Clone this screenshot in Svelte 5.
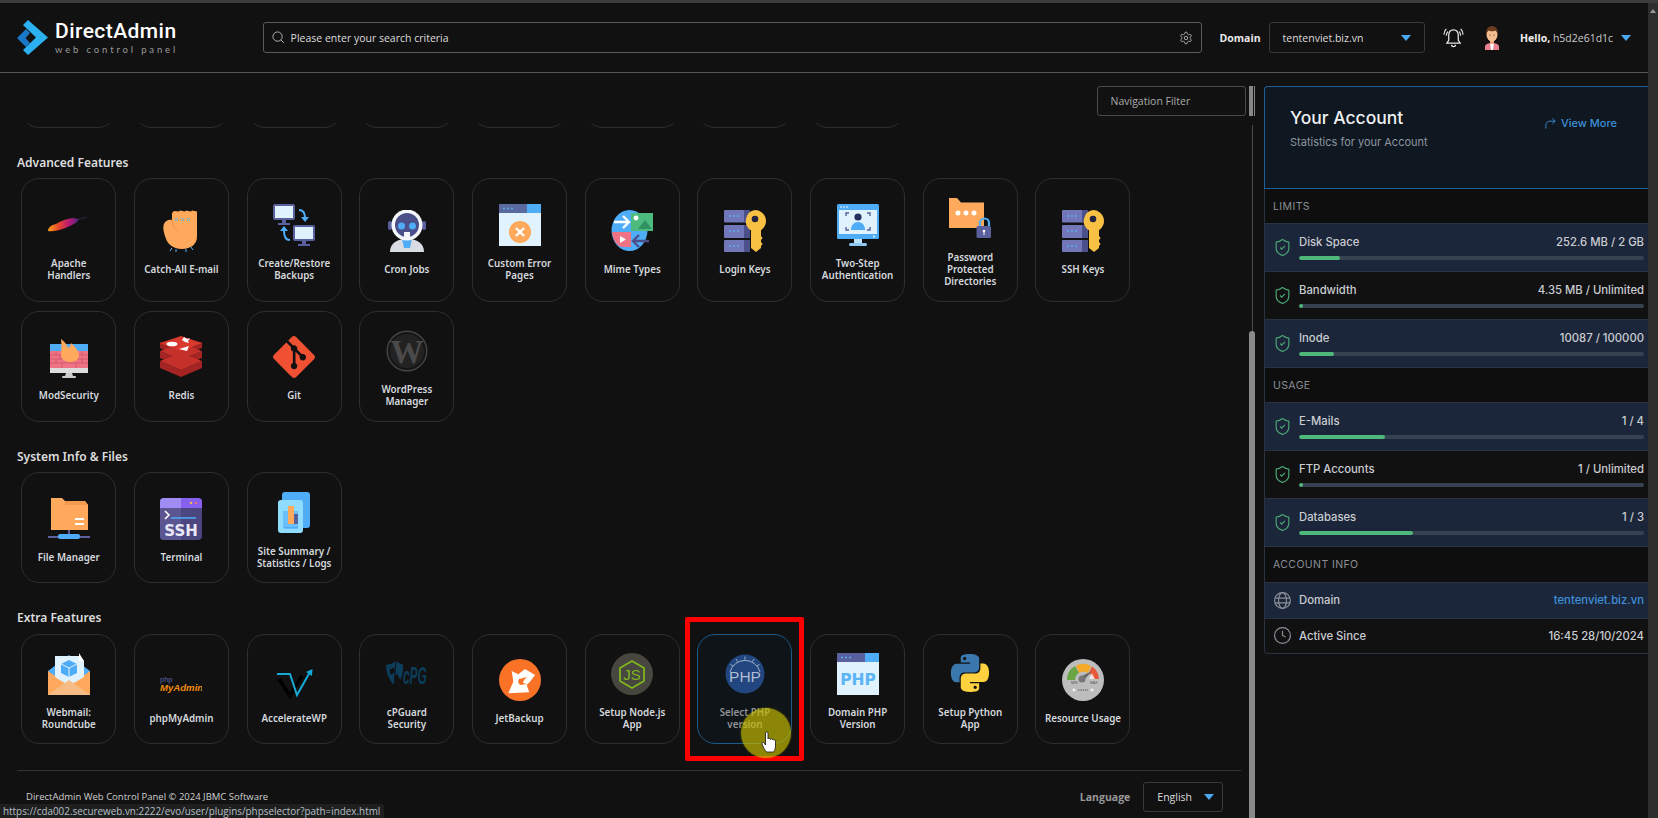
<script>
  const win = (bar, accent, inner) => `<rect x="0" y="0" width="42" height="42" fill="#e1f2ff"/><rect width="42" height="9" fill="${bar}"/><rect x="28" width="14" height="9" fill="${accent}"/><g fill="#5ab4f5"><circle cx="5" cy="4.5" r="1"/><circle cx="9" cy="4.5" r="1"/><circle cx="13" cy="4.5" r="1"/></g>${inner}`;
  const keys = `<g fill="#7177b8"><rect x="0" y="0" width="26" height="12.5" rx="1"/><rect x="0" y="15" width="26" height="13" rx="1"/><rect x="0" y="30" width="26" height="12" rx="1"/></g><g fill="#4b4f8a"><rect x="20" y="0" width="6" height="12.5"/><rect x="20" y="15" width="6" height="13"/><rect x="20" y="30" width="6" height="12"/></g><g fill="#5ab4f5"><circle cx="6" cy="6" r=".9"/><circle cx="10" cy="6" r=".9"/><circle cx="14" cy="6" r=".9"/><circle cx="6" cy="21" r=".9"/><circle cx="10" cy="21" r=".9"/><circle cx="14" cy="21" r=".9"/><circle cx="6" cy="36" r=".9"/><circle cx="10" cy="36" r=".9"/><circle cx="14" cy="36" r=".9"/></g><path fill="#f8c144" d="M31 0a11 11 0 0 1 6 20.2V26l1.6 2-1.6 2v2l1.6 2-1.6 2v2L32 42l-5-4V20.2A11 11 0 0 1 31 0z"/><circle cx="31" cy="9" r="3.3" fill="#23233f"/>`;

  const icons = {
    apache: `<defs><linearGradient id="ap" x1="0" x2="1"><stop offset="0" stop-color="#f8a01c"/><stop offset=".35" stop-color="#e8452c"/><stop offset=".7" stop-color="#b3187a"/><stop offset="1" stop-color="#4a2a78"/></linearGradient></defs><path fill="url(#ap)" d="M0 27c0-3 3-6 8-7 5-3 11-5.500 17-6l6 1c-1 3-5 5-9 7-7 3-14 6-22 5z"/><path stroke="#4a2a78" stroke-width=".6" d="M28 16l11-3"/>`,
    catchall: `<path fill="#ffa95c" d="M12 3l2-2 5 .5 1-1 5 1 1-1 5 1 1-1 5 1V27c0 7-6 12-15 12S7 34 5 26c-2-6-2-10-1-12 1-3 5-5 8-4z"/><path fill="none" stroke="#e8914a" stroke-width="1" d="M12 10c0 4 2 8 6 11"/><path stroke="#5ab4f5" stroke-width="1" d="M15 8l3 3m0-3l-3 3M21 8l3 3m0-3l-3 3M27 8l3 3m0-3l-3 3M12 38l-2 3M16 39l0 3M26 39l0 3M31 37l2 3"/>`,
    backup: `<g fill="#5a5f9e"><rect x="0" y="0" width="22" height="16" rx="2"/><rect x="9" y="16" width="4" height="3"/><rect x="5" y="19" width="12" height="2"/><rect x="20" y="21" width="22" height="16" rx="2"/><rect x="29" y="37" width="4" height="3"/><rect x="25" y="40" width="12" height="2"/></g><rect x="2" y="2" width="18" height="12" fill="#e1f2ff"/><rect x="22" y="23" width="18" height="12" fill="#e1f2ff"/><g fill="none" stroke="#4facf7" stroke-width="2"><path d="M26 6c4 0 6 3 6 8"/><path d="M16 36c-4 0-6-3-6-9" transform="translate(1 0)"/></g><path fill="#4facf7" d="M28 13h8l-4 5zM7 27h8l-4-5z"/>`,
    cron: `<path fill="#d9dde3" d="M4 42c0-9 7-13 17-13s17 4 17 13z"/><path fill="#4facf7" d="M16 29h10l-2 9h-6z"/><rect x="2" y="11" width="4" height="9" rx="2" fill="#5a5f9e"/><rect x="36" y="11" width="4" height="9" rx="2" fill="#5a5f9e"/><circle cx="21" cy="15" r="15.5" fill="#f4f6fa"/><circle cx="21" cy="15" r="12" fill="#4b4f8a"/><circle cx="15.5" cy="16" r="3.5" fill="#4facf7"/><circle cx="26.5" cy="16" r="3.5" fill="#4facf7"/><path fill="#f4f6fa" d="M18 22h6v5h-6z"/>`,
    error: win('#5a6a9e','#4facf7',`<circle cx="21" cy="28" r="11" fill="#ffa95c"/><path stroke="#fff" stroke-width="2.4" d="M17 24l8 8m0-8l-8 8"/>`),
    mime: `<ellipse cx="18.5" cy="20.5" rx="18" ry="20.5" fill="#4facf7"/><rect x="20" y="3" width="22" height="18" fill="#4dbb7e"/><circle cx="25" cy="8" r="2.4" fill="#fff"/><path fill="#2f9160" d="M27 19l7-9 7 9z"/><path fill="#ef7385" d="M1 22h19v15H12C6 37 2 30 1 22z"/><path fill="#fff" d="M9 26l6 3.5L9 33z"/><path stroke="#fff" stroke-width="2.4" fill="none" d="M3 12h14M12 6l6 6-6 6"/><path stroke="#4b4f8a" stroke-width="2.4" fill="none" d="M38 31H22M28 25l-6 6 6 6"/>`,
    keys,
    twostep: `<rect y="0" width="42" height="35" rx="1.5" fill="#4facf7"/><rect x="2" y="6" width="38" height="24" fill="#e1f2ff"/><g fill="#fff"><circle cx="4" cy="3" r=".8"/><circle cx="7" cy="3" r=".8"/><circle cx="10" cy="3" r=".8"/><circle cx="37" cy="32.5" r="1"/></g><circle cx="21" cy="13" r="3.6" fill="#23305f"/><path fill="#4facf7" d="M14 26c0-5 3-8 7-8s7 3 7 8z"/><path fill="none" stroke="#5a5f9e" stroke-width="1.4" d="M9 12V9h3M30 9h3v3M9 23v3h3M33 23v3h-3"/><rect x="17" y="35" width="8" height="4" fill="#bfe2fb"/><rect x="12" y="39" width="18" height="3" rx="1.5" fill="#8fc8f2"/>`,
    password: `<path fill="#ffa95c" d="M0 0h8l4 4.5h23V30H0z"/><g fill="#fff"><circle cx="9" cy="15" r="2.5"/><circle cx="17" cy="15" r="2.5"/><circle cx="25" cy="15" r="2.5"/></g><path fill="none" stroke="#4facf7" stroke-width="2.2" d="M31 29v-4a4.5 4.5 0 0 1 9 0v4"/><rect x="27.5" y="28" width="14.5" height="12" rx="1.5" fill="#5a5f9e"/><circle cx="35" cy="33" r="1.3" fill="#fff"/><rect x="34.5" y="33" width="1" height="4" fill="#fff"/>`,
    modsec: `<rect x="2" y="8" width="38" height="29" fill="#ddd"/><rect x="2" y="8" width="38" height="9" fill="#4facf7"/><rect x="2" y="15" width="38" height="17" fill="#ef7385"/><path stroke="#c94f63" stroke-width=".7" fill="none" d="M2 19h38M2 23h38M2 27h38M8 15v4M16 15v4M26 15v4M34 15v4M12 19v4M30 19v4M8 23v4M34 23v4M14 27v5M28 27v5"/><path fill="#ffa95c" d="M13 3c4 3 6 6 7 9 2-1 3-3 3-5 4 4 8 8 8 12 0 5-4 7-9 7s-9-3-9-7c0-4 1-10 0-16z"/><path fill="#ccc" d="M18 37h6l1 3h-8z"/><rect x="14" y="40" width="14" height="2" rx="1" fill="#ccc"/>`,
    redis: `<g fill="#a32422"><path d="M0 25l21 9 21-9v7l-21 9-21-9z"/><path d="M0 15l21 9 21-9v7l-21 9-21-9z"/><path d="M0 6l21 9 21-9v6l-21 9-21-9z"/></g><path fill="#c6302b" d="M0 25l21-8 21 8-21 9z"/><path fill="#c6302b" d="M0 15l21-8 21 8-21 9z"/><path fill="#d8392c" d="M0 7L21 0l21 7-21 8z"/><ellipse cx="12" cy="8" rx="5.5" ry="2.3" fill="#fff"/><path fill="#fff" d="M22 4l2-3 3 2 3-1-2 3 1 2-4-1zM19 13l10-3-2 5z"/>`,
    git: `<path transform="scale(1.75)" fill="#f05133" d="M23.546 10.93L13.067.452c-.604-.603-1.582-.603-2.188 0L8.708 2.627l2.76 2.76c.645-.215 1.379-.07 1.889.441.516.515.658 1.258.438 1.9l2.658 2.66c.645-.223 1.387-.078 1.9.435.721.72.721 1.884 0 2.604-.719.719-1.881.719-2.6 0-.539-.541-.674-1.337-.404-1.996L12.86 8.955v6.525c.176.086.342.203.488.348.713.721.713 1.883 0 2.6-.719.721-1.889.721-2.609 0-.719-.719-.719-1.879 0-2.598.182-.18.387-.316.605-.406V8.835c-.217-.091-.424-.222-.6-.401-.545-.545-.676-1.342-.396-2.009L7.636 3.7.45 10.881c-.6.605-.6 1.584 0 2.189l10.48 10.477c.604.604 1.582.604 2.186 0l10.43-10.43c.605-.603.605-1.582 0-2.187"/>`,
    wp: `<circle cx="21" cy="21" r="19.8" fill="#161616" stroke="#454545" stroke-width="1.4"/><circle cx="21" cy="21" r="17" fill="#222"/><text x="21" y="33" text-anchor="middle" font-family="Liberation Serif" font-weight="700" font-size="33" fill="#4a4a4a">W</text>`,
    files: `<path fill="#ffa95c" d="M3 0h11l3 3h20l3 4v25H3z"/><path fill="#f29a4d" d="M17 3h20l3 4H17z"/><rect x="27" y="20" width="9" height="2" fill="#fff"/><rect x="27" y="25" width="9" height="2" fill="#fff"/><rect x="20" y="32" width="2" height="6" fill="#5a5f9e"/><rect x="0" y="38" width="42" height="2" fill="#5a5f9e"/><rect x="10" y="36" width="22" height="5" rx="2" fill="#4facf7"/>`,
    term: `<rect width="42" height="42" rx="4" fill="#4b4580"/><path fill="#5b5592" d="M4 0h17v42H4a4 4 0 0 1-4-4V4a4 4 0 0 1 4-4z"/><path fill="#a08cf5" d="M4 0h17v10H0V4a4 4 0 0 1 4-4z"/><path fill="#8860f0" d="M21 0h17a4 4 0 0 1 4 4v6H21z"/><circle cx="31" cy="5" r="1.2" fill="#f8c144"/><circle cx="36" cy="5" r="1.2" fill="#ef7385"/><path fill="none" stroke="#fff" stroke-width="1.6" d="M5 13l4 4-4 4"/><rect x="11" y="19.2" width="25" height="1.5" fill="#4facf7"/><text x="21" y="38" text-anchor="middle" font-family="DejaVu Sans" font-weight="700" font-size="15" fill="#e8e8f5">SSH</text>`,
    summary: `<rect x="9" y="0" width="28" height="36" rx="3" fill="#4facf7"/><rect x="5" y="8" width="25" height="33" rx="3" fill="#8fdcff"/><rect x="10" y="19" width="15" height="17" fill="#4facf7" opacity=".6"/><rect x="15" y="14" width="6" height="18" fill="#ffa95c"/><rect x="21" y="22" width="4" height="10" fill="#5a5f9e"/><rect x="11" y="35" width="14" height="1.6" fill="#4facf7"/>`,
    webmail: `<path fill="#4facf7" d="M0 18L21 2l21 16v6H0z"/><path fill="#ffa95c" d="M0 18l21 15 21-15v24H0z"/><path fill="#e1f2ff" d="M7 3h24l5 5v16l-15 9L7 24z"/><path fill="#fff" d="M31 0l5 8h-5z"/><path fill="#4facf7" d="M21 7l8 4v9l-8 4-8-4v-9z"/><path fill="none" stroke="#e1f2ff" stroke-width="1" d="M13 11l8 4 8-4M21 15v9"/><path fill="#f7bb85" d="M0 42l21-15 21 15z"/>`,
    pma: `<text x="0" y="23" font-family="Liberation Sans" font-size="7.5" fill="#5a67a8">php</text><text x="0" y="32" font-family="Liberation Sans" font-style="italic" font-weight="700" font-size="9.6" fill="#f08a10">MyAdmin</text>`,
    awp: `<path fill="none" stroke="#000" stroke-width="3.5" d="M6 20l11 17 12-20"/><path fill="none" stroke="#16a9d6" stroke-width="2" d="M4 15h13l7 21 13-23"/><path fill="#16a9d6" d="M33 13l6.5-3-.5 7z"/>`,
    cpg: `<g transform="translate(0 -2) scale(.9 1.25)"><path fill="#0c3d5a" d="M0 11c4 0 8-1 10-3l9 3c0 5-1 9-3 12l-4-5-3 9c-5-3-9-9-9-16z"/><path fill="#111" d="M4 15l5-2 1 4-5 2zM9 20l3-1-2 5z"/><path stroke="#111" stroke-width="1" d="M11 8l-2 20"/></g><g transform="translate(17 31) scale(.85 1.7)"><text x="0" y="0" font-family="Liberation Sans" font-weight="700" font-style="italic" font-size="14" fill="#0c3d5a">cPG</text></g>`,
    jet: `<circle cx="21" cy="21" r="21" fill="#f97226"/><path fill="#fff" d="M12.700 12l6.600 3.300L26 10l10 6-5 6.700-3.300 3.300 2.600 7.300-21 1 5-11.600z"/><path fill="#f97226" d="M20 20l8-2-3 3-1 3 4 1-7 1-2-3z"/>`,
    node: `<circle cx="21" cy="21" r="21" fill="#47473f"/><path fill="none" stroke="#7fb51e" stroke-width="1.8" d="M21 8l12 7v13l-12 7-12-7V15z"/><text x="21" y="27" text-anchor="middle" font-family="Liberation Sans" font-size="15" fill="#7fb51e">JS</text>`,
    selectphp: `<circle cx="21" cy="21" r="19.5" fill="#22467f"/><path fill="none" stroke="#9fb0cc" stroke-width="1" d="M6 19a15.5 15.5 0 0 1 30 0"/><path stroke="#9fb0cc" stroke-width="1" d="M21 3.5v3M12 6l1.5 2.6M30 6l-1.5 2.6M6.5 11.5l2.6 1.5M35.5 11.5l-2.6 1.5"/><text x="21" y="29" text-anchor="middle" font-family="Liberation Sans" font-size="15.5" fill="#aebbd2">PHP</text>`,
    domainphp: win('#5a5f9e','#4facf7',`<text x="21" y="32" text-anchor="middle" font-family="DejaVu Sans" font-weight="700" font-size="15.5" fill="#5ab4f5">PHP</text>`),
    python: `<g transform="translate(2 1) scale(1.58)" fill-rule="evenodd"><path fill="#3a77ad" d="M14.25.18l.9.2.73.26.59.3.45.32.34.34.25.34.16.33.1.3.04.26.02.2-.01.13V8.5l-.05.63-.13.55-.21.46-.26.38-.3.31-.33.25-.35.19-.35.14-.33.1-.3.07-.26.04-.21.02H8.77l-.69.05-.59.14-.5.22-.41.27-.33.32-.27.35-.2.36-.15.37-.1.35-.07.32-.04.27-.02.21v3.06H3.17l-.21-.03-.28-.07-.32-.12-.35-.18-.36-.26-.36-.36-.35-.46-.32-.59-.28-.73-.21-.88-.14-1.05-.05-1.23.06-1.22.16-1.04.24-.87.32-.71.36-.57.4-.44.42-.33.42-.24.4-.16.36-.1.32-.05.24-.01h.16l.06.01h8.16v-.83H6.18l-.01-2.75-.02-.37.05-.34.11-.31.17-.28.25-.26.31-.23.38-.2.44-.18.51-.15.58-.12.64-.1.71-.06.77-.04.84-.02 1.27.05zm-6.3 1.98l-.23.33-.08.41.08.41.23.34.33.22.41.09.41-.09.33-.22.23-.34.08-.41-.08-.41-.23-.33-.33-.22-.41-.09-.41.09z"/><path fill="#fdd23e" d="M21.04 6.11l.28.06.32.12.35.18.36.27.36.35.35.47.32.59.28.73.21.88.14 1.04.05 1.23-.06 1.23-.16 1.04-.24.86-.32.71-.36.57-.4.45-.42.33-.42.24-.4.16-.36.09-.32.05-.24.02-.16-.01h-8.22v.82h5.84l.01 2.76.02.36-.05.34-.11.31-.17.29-.25.25-.31.24-.38.2-.44.17-.51.15-.58.13-.64.09-.71.07-.77.04-.84.01-1.27-.04-1.07-.14-.9-.2-.73-.25-.59-.3-.45-.33-.34-.34-.25-.34-.16-.33-.1-.3-.04-.25-.02-.2.01-.13v-5.34l.05-.64.13-.54.21-.46.26-.38.3-.32.33-.24.35-.2.35-.14.33-.1.3-.06.26-.04.21-.02.13-.01h5.84l.69-.05.59-.14.5-.21.41-.28.33-.32.27-.35.2-.36.15-.36.1-.35.07-.32.04-.28.02-.21V6.07h2.09l.14.01zm-6.47 14.25l-.23.33-.08.41.08.41.23.33.33.23.41.08.41-.08.33-.23.23-.33.08-.41-.08-.41-.23-.33-.33-.23-.41-.08-.41.08z"/></g>`,
    usage: `<circle cx="21" cy="21" r="21" fill="#bdbdbd"/><path fill="#69a544" d="M5 21A16 16 0 0 1 13 7l4 7a8 8 0 0 0-4 7z"/><path fill="#f4a928" d="M14 6.5A16 16 0 0 1 29 7l-3 7a9 9 0 0 0-9 0z"/><path fill="#e8583a" d="M30 7.5A16 16 0 0 1 37 20h-6a9 9 0 0 0-4-6z"/><path fill="#fff" d="M30 14l3 6h-6z" opacity=".7"/><path fill="#666" d="M18 18l12-6-9 10z"/><circle cx="20" cy="20" r="3.5" fill="#777"/><text x="9" y="25" font-family="Liberation Sans" font-size="3.6" fill="#555">MIN</text><text x="28" y="25" font-family="Liberation Sans" font-size="3.6" fill="#555">MAX</text><g fill="#eee"><circle cx="12" cy="31" r="1.6"/><circle cx="30" cy="31" r="1.6"/></g><path stroke="#555" stroke-width="1" stroke-dasharray="1.4 .9" d="M16 31h10" stroke-opacity="1"/>`
  };

  const sections = [
    { title: 'Advanced Features', tall: true, items: [
      ['Apache Handlers','apache'],['Catch-All E-mail','catchall'],['Create/Restore Backups','backup'],['Cron Jobs','cron'],['Custom Error Pages','error'],['Mime Types','mime'],['Login Keys','keys'],['Two-Step Authentication','twostep'],['Password Protected Directories','password'],['SSH Keys','keys'],['ModSecurity','modsec'],['Redis','redis'],['Git','git'],['WordPress Manager','wp']
    ]},
    { title: 'System Info & Files', items: [['File Manager','files'],['Terminal','term'],['Site Summary / Statistics / Logs','summary']]},
    { title: 'Extra Features', items: [
      ['Webmail: Roundcube','webmail'],['phpMyAdmin','pma'],['AccelerateWP','awp'],['cPGuard Security','cpg'],['JetBackup','jet'],['Setup Node.js App','node'],['Select PHP version','selectphp',true],['Domain PHP Version','domainphp'],['Setup Python App','python'],['Resource Usage','usage']
    ]}
  ];

  const groups = [
    { title: 'LIMITS', rows: [['Disk Space','252.6 MB / 2 GB',12],['Bandwidth','4.35 MB / Unlimited',1],['Inode','10087 / 100000',10]] },
    { title: 'USAGE', rows: [['E-Mails','1 / 4',25],['FTP Accounts','1 / Unlimited',1],['Databases','1 / 3',33]] }
  ];
</script>

<div class="page">
  <div class="strip"></div>
  <div class="frame">
    <div class="app">
      <header class="header">
        <div class="logo">
          <svg class="mark" viewBox="0 0 31 35"><path fill="#1b78c8" d="M0 18l9-9 4 4-4.500 5 4.500 5-4 4z"/><path fill="#2bb0f0" d="M11 0l20 17.500L11 35l-5-5 13-12.500L6 5z"/></svg>
          <div class="logotext">
            <div class="brand">DirectAdmin</div>
            <div class="tag">web control panel</div>
          </div>
        </div>
        <div class="search">
          <svg class="ic-search" viewBox="0 0 14 14" fill="none" stroke="#bbb" stroke-width="1"><circle cx="6" cy="6" r="5"/><path d="M9.600 9.600L13 13"/></svg>
          <span class="ph">Please enter your search criteria</span>
          <svg class="ic-gear" viewBox="0 0 24 24" fill="none" stroke="#bbb" stroke-width="1.500"><path d="M12.220 2h-.44a2 2 0 0 0-2 2v.18a2 2 0 0 1-1 1.730l-.43.25a2 2 0 0 1-2 0l-.15-.08a2 2 0 0 0-2.730.73l-.22.38a2 2 0 0 0 .73 2.730l.15.1a2 2 0 0 1 1 1.720v.51a2 2 0 0 1-1 1.740l-.15.09a2 2 0 0 0-.73 2.730l.22.38a2 2 0 0 0 2.730.73l.15-.08a2 2 0 0 1 2 0l.43.25a2 2 0 0 1 1 1.730V20a2 2 0 0 0 2 2h.44a2 2 0 0 0 2-2v-.18a2 2 0 0 1 1-1.730l.43-.25a2 2 0 0 1 2 0l.15.08a2 2 0 0 0 2.730-.73l.22-.39a2 2 0 0 0-.73-2.730l-.15-.08a2 2 0 0 1-1-1.740v-.5a2 2 0 0 1 1-1.740l.15-.09a2 2 0 0 0 .73-2.730l-.22-.38a2 2 0 0 0-2.730-.73l-.15.08a2 2 0 0 1-2 0l-.43-.25a2 2 0 0 1-1-1.730V4a2 2 0 0 0-2-2z"/><circle cx="12" cy="12" r="3"/></svg>
        </div>
        <span class="dlabel">Domain</span>
        <div class="dselect"><span>tentenviet.biz.vn</span><i class="caret"></i></div>
        <svg class="bell" viewBox="0 0 22 24" fill="none" stroke="#e8e8e8" stroke-width="1.300"><path d="M11 4c-3.500 0-5 2.500-5 6v5l-2 3h14l-2-3v-5c0-3.500-1.500-6-5-6z"/><path d="M9 19.500a2 2 0 0 0 4 0M1 9c.2-2.500 1-4.500 2.500-6M3.500 10c.1-1.800.6-3 1.500-4.300M21 9c-.2-2.500-1-4.500-2.500-6M18.500 10c-.1-1.800-.6-3-1.500-4.300"/></svg>
        <svg class="avatar" viewBox="0 0 20 24"><path fill="#e8808f" d="M3 24v-3c0-3 3-4 7-4s7 1 7 4v3z"/><path fill="#fff" d="M8 17h4l-1 7H9z"/><rect x="8" y="13" width="4" height="5" fill="#e8a87c"/><ellipse cx="10" cy="9" rx="5.500" ry="6.500" fill="#f4bd8f"/><circle cx="8" cy="9" r=".6" fill="#4a2a10"/><circle cx="12" cy="9" r=".6" fill="#4a2a10"/><path fill="#6b3d20" d="M4 9c-.5-6 2.500-9 6-9s6.500 3 6 9c-1-2-1-4-2-4.500-2 1-6 1-8 0C5 5 5 7 4 9z"/></svg>
        <span class="hello"><b>Hello,</b> h5d2e61d1c</span>
        <i class="caret user"></i>
      </header>

      <div class="body">
        <main class="pane">
          <div class="filterbar"><div class="filter">Navigation Filter</div></div>
          <div class="stubs">{#each Array(8) as _}<div class="stub"></div>{/each}</div>

          {#each sections as s}
            <section class="sec">
              <h2>{s.title}</h2>
              <div class="grid" class:tall={s.tall}>
                {#each s.items as [label, ic, active]}
                  <div class="card" class:active>
                    <svg class="icon" viewBox="0 0 42 42">{@html icons[ic]}</svg>
                    <span class="label">{label}</span>
                    {#if active}
                      <div class="redbox"></div>
                      <div class="spot"></div>
                      <svg class="hand" viewBox="0 0 16 22"><path fill="#fff" stroke="#111" stroke-width=".8" d="M4.500 2C4.500.5 7 .5 7 2v6c0-1 2.500-1 2.500.5 0-1 2.500-1 2.500.5 0-.5 2.500-.5 2.500 1v5c0 3-1.500 6-2.500 6H6c-1 0-2-2-3-3.500L1 13c-.5-1.500 1.500-2 2.300-1l1.200 2z"/></svg>
                    {/if}
                  </div>
                {/each}
              </div>
            </section>
          {/each}

          <footer class="foot">
            <span class="copy">DirectAdmin Web Control Panel © 2024 JBMC Software</span>
            <span class="lang">Language</span>
            <div class="langsel"><span>English</span><i class="caret"></i></div>
          </footer>
        </main>

        <div class="rail">
          <div class="grip"><i></i><i></i><i></i></div>
          <div class="track"><div class="thumb"></div></div>
        </div>

        <aside class="side">
          <div class="hero">
            <div>
              <div class="hero-title">Your Account</div>
              <div class="hero-sub">Statistics for your Account</div>
            </div>
            <div class="more">
              <svg viewBox="0 0 14 14" fill="none" stroke="#3d8fd8" stroke-width="1"><path d="M2 12.500V9c0-3 2-4.500 4.500-4.500H12M9 1.500l3 3-3 3"/></svg>
              View More
            </div>
          </div>
          {#each groups as g}
            <div class="gtitle">{g.title}</div>
            {#each g.rows as [name, val, pct], i}
              <div class="row" class:alt={i !== 1}>
                <svg class="shield" viewBox="0 0 24 24" fill="none" stroke="#4aa574" stroke-width="1.500"><path d="M20 13c0 5-3.500 7.500-7.660 8.950a1 1 0 0 1-.67-.01C7.500 20.500 4 18 4 13V6a1 1 0 0 1 1-1c2 0 4.500-1.200 6.240-2.720a1.170 1.170 0 0 1 1.520 0C14.510 3.810 17 5 19 5a1 1 0 0 1 1 1z"/><path d="m9 12 2 2 4-4"/></svg>
                <div class="rbody">
                  <div class="rline"><span>{name}</span><span>{val}</span></div>
                  <div class="bar"><div class="fill" style:width="{pct}%"></div></div>
                </div>
              </div>
            {/each}
          {/each}
          <div class="gtitle">ACCOUNT INFO</div>
          <div class="row info alt">
            <svg class="shield" viewBox="0 0 24 24" fill="none" stroke="#8a8f98" stroke-width="1.500"><circle cx="12" cy="12" r="10"/><ellipse cx="12" cy="12" rx="5" ry="10"/><path d="M2.500 9h19M2.500 15h19"/></svg>
            <div class="rline wide"><span>Domain</span><span class="link">tentenviet.biz.vn</span></div>
          </div>
          <div class="row info last">
            <svg class="shield" viewBox="0 0 24 24" fill="none" stroke="#8a8f98" stroke-width="1.500"><circle cx="12" cy="12" r="10"/><path d="M12 6v6l4 2"/></svg>
            <div class="rline wide"><span>Active Since</span><span>16:45 28/10/2024</span></div>
          </div>
        </aside>
      </div>
    </div>
    <div class="pagebar"><i></i></div>
  </div>
  <div class="status">https://cda002.secureweb.vn:2222/evo/user/plugins/phpselector?path=index.html</div>
</div>

<style>
  :global(body) { margin: 0; background: #111; }
  .page { position: relative; width: 1658px; height: 818px; overflow: hidden; display: flex; flex-direction: column; background: #111; color: #ddd; font-family: "Open Sans", sans-serif; }
  .strip { height: 3px; background: #3c3c3c; flex: none; }
  .frame { flex: 1; display: flex; min-height: 0; }
  .app { flex: 1; min-width: 0; display: flex; flex-direction: column; }
  .pagebar { width: 10px; flex: none; background: #2e2e2e; display: flex; justify-content: center; padding-top: 6px; box-sizing: border-box; }
  .pagebar i { width: 0; height: 0; border: 3px solid transparent; border-bottom: 4px solid #999; border-top: 0; }

  .header { height: 69px; flex: none; border-bottom: 1px solid #555; display: flex; align-items: center; padding: 0 17px; }
  .logo { width: 245.6px; flex: none; display: flex; align-items: center; gap: 7px; }
  .mark { width: 31px; height: 35px; flex: none; }
  .brand { font: 500 21px/20px Roboto, sans-serif; letter-spacing: .45px; color: #fff; }
  .tag { font: 400 9.5px/11px Lato, sans-serif; letter-spacing: 2.85px; color: #9a9a9a; margin-top: 3px; white-space: nowrap; }
  .search { flex: 1; height: 31px; box-sizing: border-box; border: 1px solid #5a5a5a; border-radius: 3px; display: flex; align-items: center; padding: 0 8px 0 8px; }
  .ic-search { width: 13px; height: 13px; flex: none; margin-right: 6px; }
  .ph { flex: 1; font-size: 10.5px; color: #ddd; }
  .ic-gear { width: 14px; height: 14px; flex: none; }
  .dlabel { margin-left: 18px; font-size: 10.5px; font-weight: 700; color: #e8e8e8; width: 41px; flex: none; }
  .dselect { margin-left: 8px; width: 156.5px; height: 31px; box-sizing: border-box; flex: none; border: 1px solid #3a3a3a; border-radius: 3px; display: flex; align-items: center; justify-content: space-between; padding: 0 13px; font-size: 10.5px; color: #ddd; }
  .caret { display: block; width: 0; height: 0; border-left: 5px solid transparent; border-right: 5px solid transparent; border-top: 6px solid #4aa8f0; flex: none; }
  .bell { width: 21px; height: 23px; margin-left: 17.5px; flex: none; }
  .avatar { width: 20px; height: 24px; margin-left: 18px; flex: none; }
  .hello { margin-left: 18.5px; font-size: 10.5px; color: #ccc; width: 99px; flex: none; white-space: nowrap; }
  .hello b { color: #eee; font-weight: 700; }
  .caret.user { margin-left: 2px; }

  .body { flex: 1; min-height: 0; display: flex; }
  .pane { width: 1249px; flex: none; box-sizing: border-box; padding: 13px 0 0 17px; }
  .filterbar { display: flex; justify-content: flex-end; padding-right: 3px; }
  .filter { width: 149.5px; height: 30px; box-sizing: border-box; border: 1px solid #4a4a4a; border-radius: 3px; display: flex; align-items: center; padding-left: 13px; font-size: 10.5px; color: #aaa; }
  .stubs { height: 4.5px; margin-top: 7px; overflow: hidden; display: flex; align-items: flex-end; gap: 17.7px; padding-left: 4.3px; }
  .stub { width: 95px; height: 40px; flex: none; box-sizing: border-box; border: 1px solid #2e2e2e; border-radius: 18px; }

  .sec { margin-top: 27px; }
  h2 { margin: 0 0 7.6px; font: 600 12px/16px "Noto Sans", sans-serif; color: #ddd; }
  .grid { display: grid; grid-template-columns: repeat(10, 95px); column-gap: 17.7px; row-gap: 9px; padding-left: 4.3px; grid-auto-rows: 110.7px; }
  .grid.tall { grid-template-rows: 124px 110.7px; }
  .card { position: relative; box-sizing: border-box; border: 1px solid #2e2e2e; border-radius: 18px; padding: 6px 8px 0; display: flex; flex-direction: column; align-items: center; justify-content: center; }
  .icon { width: 42px; height: 42px; flex: none; margin-bottom: 12px; }
  .label { font: 600 9.8px/12px "Noto Sans", sans-serif; color: #d4d8dd; text-align: center; }
  .card.active { border-color: #1c5a8a; background: #0f1418; }
  .card.active .label { color: #8f9296; }
  .redbox { position: absolute; left: -13.5px; right: -12.5px; top: -18px; bottom: -17.7px; border: 5px solid #f00; border-radius: 2px; pointer-events: none; }
  .spot { position: absolute; left: 43px; top: 73px; width: 50px; height: 50px; border-radius: 50%; background: rgba(205, 195, 0, .66); box-shadow: 0 0 2px rgba(205,195,0,.5); }
  .hand { position: absolute; left: 62.5px; top: 96px; width: 16px; height: 22px; }

  .foot { margin: 26px 8px 0 0; border-top: 1px solid #333; padding: 10.5px 18px 0 9px; display: flex; align-items: center; }
  .copy { flex: 1; font-size: 9.5px; color: #cfcfcf; }
  .lang { font-size: 10.5px; font-weight: 700; color: #999; margin-right: 13px; }
  .langsel { width: 79.7px; height: 30px; box-sizing: border-box; border: 1px solid #3a3a3a; border-radius: 3px; display: flex; align-items: center; gap: 12px; padding-left: 13px; font-size: 10.5px; color: #ddd; }

  .rail { width: 6px; flex: none; margin-top: 13px; display: flex; flex-direction: column; }
  .grip { height: 30px; flex: none; display: flex; justify-content: space-between; }
  .grip i { width: 1.5px; background: #888; }
  .track { position: relative; flex: 1; margin-top: 9px; }
  .track::before { content: ""; position: absolute; left: 2.5px; top: 0; bottom: 0; width: 1px; background: #4a4a4a; }
  .thumb { position: absolute; left: 0; right: 0; top: 206px; bottom: 0; background: #8a8a8a; border-radius: 3px 3px 0 0; }

  .side { width: 384px; margin: 13px 0 0 auto; flex: none; font-family: Inter, sans-serif; }
  .hero { height: 103px; box-sizing: border-box; background: #0f1720; border: 1px solid #1d6098; border-right: 0; border-radius: 4px 0 0 0; padding: 19px 31px 0 25px; display: flex; justify-content: space-between; align-items: flex-start; }
  .hero-title { font-size: 17.5px; line-height: 24px; font-weight: 500; color: #eef0f2; }
  .hero-sub { font-size: 11px; color: #8d96a0; margin-top: 5px; }
  .more { display: flex; align-items: center; gap: 4px; font-size: 11px; color: #3d8fd8; margin-top: 10px; font-weight: 500; }
  .more svg { width: 13px; height: 13px; }
  .gtitle { height: 35.2px; box-sizing: border-box; display: flex; align-items: center; padding-left: 8px; padding-top: 1px; font-size: 10.5px; letter-spacing: .4px; color: #8b8f95; background: #0e0e0e; border-left: 1px solid #2a3342; border-bottom: 1px solid #2a3342; }
  .row { height: 48px; box-sizing: border-box; display: flex; align-items: center; gap: 7px; padding: 0 4px 0 8px; border-left: 1px solid #2a3342; border-bottom: 1px solid #2a3342; background: #111; }
  .row.alt { background: #1c263a; }
  .shield { width: 19px; height: 19px; flex: none; }
  .rbody { flex: 1; }
  .rline { display: flex; justify-content: space-between; font-size: 11.3px; font-weight: 500; color: #c9ccd1; line-height: 14px; }
  .rline.wide { flex: 1; }
  .bar { height: 4px; margin-top: 7px; border-radius: 2px; background: #364252; overflow: hidden; }
  .fill { height: 100%; min-width: 3.5px; background: #4fb87a; border-radius: 2px; }
  .row.info { height: 36px; }
  .row.last { height: 35px; border-radius: 0 0 0 4px; }
  .link { color: #3d8fd8; }

  .status { position: absolute; left: 0; bottom: 0; width: 384px; height: 14px; box-sizing: border-box; padding-left: 3px; background: #1f1f1f; border-radius: 0 3px 0 0; color: #b5c0c8; font: 9.9px/15px "Open Sans", sans-serif; white-space: nowrap; }
</style>
